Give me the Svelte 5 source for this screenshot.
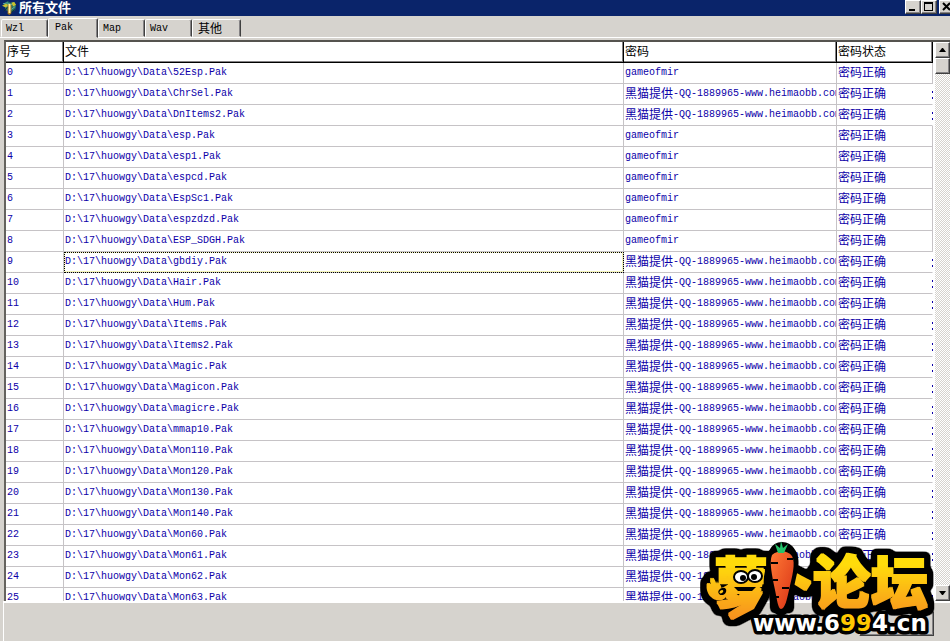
<script lang="ts">
	const tabs = ['Wzl', 'Pak', 'Map', 'Wav', '其他'];
	let activeTab = $state('Pak');
	let selected = $state(9);

	const names = [
		'52Esp', 'ChrSel', 'DnItems2', 'esp', 'esp1', 'espcd', 'EspSc1', 'espzdzd', 'ESP_SDGH',
		'gbdiy', 'Hair', 'Hum', 'Items', 'Items2', 'Magic', 'Magicon', 'magicre', 'mmap10',
		'Mon110', 'Mon120', 'Mon130', 'Mon140', 'Mon60', 'Mon61', 'Mon62', 'Mon63'
	];
	const plain = ['52Esp', 'esp', 'esp1', 'espcd', 'EspSc1', 'espzdzd', 'ESP_SDGH'];

	const files = names.map((name) => ({
		path: `D:\\17\\huowgy\\Data\\${name}.Pak`,
		shared: !plain.includes(name)
	}));
</script>

<div class="window">
	<header class="titlebar">
		<svg class="app-icon" viewBox="0 0 16 16" aria-hidden="true">
			<path d="M2 4 6 1l3 2 4-1 2 4-1 5-4 2-6-2z" fill="#247064" />
			<path d="m1 4 5-1 2 3 5-3M3 7l4-1 3 4 4-3" stroke="#63b1a5" fill="none" />
			<path d="M0 6 4 4l3 1-3 3zM10 3l3-1 2 3-3 2z" fill="#c9c22e" />
			<path d="M6 5h4v9l-2 2-2-1z" fill="#a8741c" />
			<path d="M7 4h2v10H7z" fill="#fff0a0" />
			<path d="M2 12l4-4M10 13l4-3" stroke="#102c35" />
		</svg>
		<h1>所有文件</h1>
		<div class="controls">
			<button aria-label="Minimize">
				<svg viewBox="0 0 12 11"><path d="M2 8h6v2H2z" /></svg>
			</button>
			<button aria-label="Maximize">
				<svg viewBox="0 0 12 11"><path d="M1 1h9v9H1zM2 3v6h7V3z" fill-rule="evenodd" /></svg>
			</button>
			<button class="close" aria-label="Close">
				<svg viewBox="0 0 12 11"><path d="m2 2 7 7m0-7L2 9" stroke="#000" stroke-width="2" /></svg>
			</button>
		</div>
	</header>

	<div class="tabs" role="tablist">
		{#each tabs as tab}
			<button
				role="tab"
				class:active={tab === activeTab}
				class:wide={tab === '其他'}
				aria-selected={tab === activeTab}
				onclick={() => (activeTab = tab)}>{tab}</button>
		{/each}
	</div>

	<main class="grid">
		<div class="rows">
			<table>
				<colgroup>
					<col class="col-id" />
					<col />
					<col class="col-password" />
					<col class="col-state" />
				</colgroup>
				<thead>
					<tr><th>序号</th><th>文件</th><th>密码</th><th>密码状态</th></tr>
				</thead>
				<tbody>
					{#each files as file, i}
						<tr class:shared={file.shared}>
							<td>{i}</td>
							<td class:selected={i === selected} onclick={() => (selected = i)}>{file.path}</td>
							<td>
								{#if file.shared}<span class="cjk">黑猫提供</span>-QQ-1889965-www.heimaobb.com{:else}gameofmir{/if}
							</td>
							<td><span class="cjk">密码正确</span></td>
						</tr>
					{/each}
				</tbody>
			</table>
		</div>
		<div class="scrollbar">
			<button aria-label="Scroll up"><svg viewBox="0 0 7 4"><path d="M0 4h7L4 0H3z" /></svg></button>
			<div class="thumb"></div>
			<button class="down" aria-label="Scroll down"><svg viewBox="0 0 7 4"><path d="M0 0h7L4 4H3z" /></svg></button>
		</div>
	</main>

	<footer>
		<button class="action" disabled aria-label="Save"></button>
	</footer>

	<svg class="watermark" viewBox="0 0 236 104" role="img" aria-label="萝卜论坛 www.6994.cn">
		<defs>
			<linearGradient id="gold" gradientUnits="userSpaceOnUse" x1="0" y1="20" x2="0" y2="82">
				<stop offset="0.1" stop-color="#ffdc0a" />
				<stop offset="1" stop-color="#f78f1e" />
			</linearGradient>
			<linearGradient id="carrot" x1="0" y1="0" x2="1" y2="1">
				<stop offset="0" stop-color="#ff7a35" />
				<stop offset="1" stop-color="#d93216" />
			</linearGradient>
			<!-- thickens the lettering and lays a rounded black rim behind it -->
			<filter id="rim" filterUnits="userSpaceOnUse" x="-10" y="-10" width="256" height="120" color-interpolation-filters="sRGB">
				<feMorphology in="SourceGraphic" operator="dilate" radius="1" result="bold" />
				<feMorphology in="SourceAlpha" operator="dilate" radius="5" result="wide" />
				<feGaussianBlur in="wide" stdDeviation="2" />
				<feComponentTransfer result="edge">
					<feFuncA type="linear" slope="8" intercept="-0.6" />
				</feComponentTransfer>
				<feMerge>
					<feMergeNode in="edge" />
					<feMergeNode in="bold" />
				</feMerge>
			</filter>
		</defs>
		<g class="brand" filter="url(#rim)">
			<text x="14" y="66" font-size="54">萝</text>
			<text x="60" y="64" font-size="54">卜</text>
			<text x="113" y="66" font-size="57">论</text>
			<text x="171" y="67" font-size="57">坛</text>
			<path d="M28 33h36l-3 16H29z" />
			<path d="M62 55 53 71 32 82l-3-5 14-9-8-5 7-6z" />
			<path d="M12 59c-4-3-6-13-3-12l4 4-2-8c1-3 3 0 5 7l2-5 3 8 5 2c0 7-8 10-14 4z" />
		</g>
		<path d="M22 51c5-2 6 5 1 7-5 1-7-5-1-7z" fill="#000" />
		<path d="M20 54c2-2 4-1 3 1s-5 2-3-1z" fill="#ffc512" />
		<path d="M34 50h22l-4 4H38z" />
		<g stroke="#000" stroke-width="2">
			<ellipse cx="41" cy="40" rx="7" ry="6" fill="#fff" />
			<ellipse cx="55" cy="39" rx="7" ry="6" fill="#fff" />
		</g>
		<circle cx="43" cy="41" r="3" /><circle cx="54" cy="40" r="3" />
		<path d="M82 5c-11 0-17 12-15 27l6 40c2 9 14 9 16 0l9-40c3-15-5-27-16-27z" />
		<path d="M72 18c6-5 15-5 20 1 4 7 0 21-3 34-2 9-4 19-8 19-3 0-4-10-6-19-3-15-6-28-3-35z" fill="url(#carrot)" />
		<path d="m78 16-3-9 5 4 1-7 2 7 5-4-4 9z" fill="#24c46b" />
		<path d="M71 26h7m9-4h6M73 43h5m4 8h7m-13 9h3" stroke="#000" stroke-width="2" />
		<text class="site" x="53" y="94">www.6<tspan fill="#ffc800">99</tspan>4.cn</text>
	</svg>
</div>

<style>
	:global(body) {
		margin: 0;
		background: #d6d3ce;
	}

	.window {
		position: relative;
		display: flex;
		flex-direction: column;
		height: 100vh;
		overflow: hidden;
		background: #d6d3ce;
		color: #000;
		font: 12px/16px "Noto Sans CJK SC", sans-serif;
	}

	button {
		box-sizing: border-box;
		padding: 0;
		border: 1px solid;
		border-color: #fff #404040 #404040 #fff;
		border-radius: 0;
		background: #d6d3ce;
		box-shadow: inset -1px -1px #848284;
		color: #000;
		font: inherit;
	}

	.titlebar {
		display: flex;
		flex: none;
		align-items: flex-start;
		height: 16px;
		padding-left: 2px;
		background: #0a246a;
		color: #fff;
	}

	.app-icon {
		width: 15px;
		height: 15px;
	}

	h1 {
		margin: 0 auto 0 2px;
		font-size: 13px;
		line-height: 14px;
		font-weight: 700;
	}

	.controls {
		display: flex;
		margin-right: -5px;
	}

	.controls button {
		display: flex;
		width: 16px;
		height: 14px;
	}

	.controls svg {
		width: 12px;
		height: 11px;
		margin: 0 1px;
	}

	.controls .close {
		margin-left: 2px;
	}

	.tabs {
		display: flex;
		flex: none;
		align-items: flex-end;
		height: 21px;
		padding-left: 1px;
		border-bottom: 1px solid #fff;
		margin-bottom: 2px;
	}

	.tabs button {
		width: 47px;
		height: 18px;
		padding-left: 4px;
		border-color: #fff #404040 transparent #fff;
		border-radius: 2px 2px 0 0;
		box-shadow: inset -1px 0 #848284;
		font: 10px/18px "Liberation Mono", monospace;
		text-align: left;
	}

	.tabs .active {
		width: 50px;
		height: 20px;
		margin-bottom: -1px;
		padding: 0 0 2px 6px;
	}

	.tabs .wide {
		width: 49px;
		padding-left: 5px;
		font: 12px/16px "Noto Sans CJK SC", sans-serif;
	}

	.grid {
		display: flex;
		flex: 1;
		min-height: 0;
		margin-left: 4px;
		border-top: 2px solid #55534f;
		border-left: 2px solid #65635f;
		background: #fff;
	}

	.rows {
		flex: 1;
		min-width: 0;
		overflow: hidden;
		padding-right: 2px;
	}

	table {
		width: 100%;
		table-layout: fixed;
		border-collapse: separate;
		border-spacing: 0;
	}

	.col-id {
		width: 58px;
	}

	.col-password {
		width: 213px;
	}

	.col-state {
		width: 96px;
	}

	th,
	td {
		box-sizing: border-box;
		height: 21px;
		padding: 0 0 0 1px;
		overflow: hidden;
		line-height: 20px;
		text-align: left;
		vertical-align: top;
		white-space: nowrap;
	}

	th {
		border-right: 1px solid #000;
		border-bottom: 1px solid #000;
		box-shadow: inset -1px -1px #848284;
		font-weight: 400;
		line-height: 18px;
	}

	td {
		border-right: 1px solid #c6c3c6;
		border-bottom: 1px solid #c6c3c6;
		color: #0c00a8;
		font-family: "Liberation Mono", monospace;
		font-size: 10px;
	}

	.cjk {
		font: 12px/18px "Noto Sans CJK SC", sans-serif;
		vertical-align: top;
	}

	.shared td:last-child {
		border-right-color: transparent;
		background: linear-gradient(#0c00a8 0 0) right 0 top 7px / 1px 2px no-repeat border-box,
			linear-gradient(#0c00a8 0 0) right 0 top 13px / 1px 2px no-repeat border-box;
	}

	.selected {
		outline: 1px dotted #000;
		outline-offset: -1px;
		box-shadow: inset 0 0 0 1px #f4f4b8;
	}

	.scrollbar {
		display: flex;
		flex-direction: column;
		width: 15px;
		background: repeating-conic-gradient(#fff 0 25%, #d6d3ce 0 50%) 0 0 / 2px 2px;
	}

	.scrollbar button {
		height: 16px;
	}

	.scrollbar svg {
		display: block;
		width: 7px;
		height: 4px;
		margin: 0 auto;
	}

	.thumb {
		height: 14px;
		border: 1px solid;
		border-color: #fff #404040 #404040 #fff;
		background: #d6d3ce;
		box-shadow: inset -1px -1px #848284;
	}

	.scrollbar .down {
		margin-top: auto;
	}

	footer {
		display: flex;
		flex: none;
		justify-content: flex-end;
		box-sizing: border-box;
		height: 40px;
		margin-left: 3px;
		padding: 8px 16px 0 0;
		border-top: 2px solid #fff;
		border-left: 1px solid #fff;
	}

	.action {
		width: 75px;
		height: 25px;
	}

	.watermark {
		position: absolute;
		right: 14px;
		bottom: 0;
		width: 236px;
		height: 104px;
	}

	.brand {
		fill: url(#gold);
		font-family: "Noto Sans CJK SC", sans-serif;
		font-weight: 900;
	}

	.site {
		fill: #fff;
		stroke: #000;
		stroke-width: 7px;
		stroke-linejoin: round;
		paint-order: stroke;
		font: 700 23px "DejaVu Sans", sans-serif;
	}
</style>
